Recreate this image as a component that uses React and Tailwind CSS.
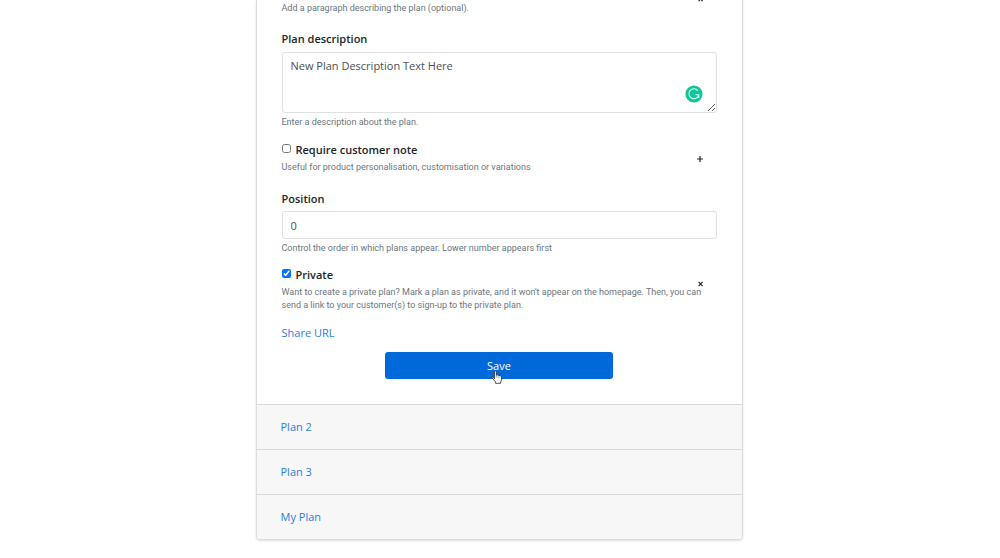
import { useState } from 'react';

const plans = ['Plan 2', 'Plan 3', 'My Plan'];

function HelpText({ children }) {
  return <p className="font-['Roboto',sans-serif] text-[9px] leading-[13px] text-[#6c757d]">{children}</p>;
}

function ToggleButton({ open, label, onClick }) {
  return (
    <button
      type="button"
      aria-label={label}
      onClick={onClick}
      className="absolute right-[11px] top-3 flex h-3 w-3 items-center justify-center text-[#212529]"
    >
      <svg viewBox="0 0 8 8" className="h-2 w-2" fill="none" stroke="currentColor" strokeWidth="1.2">
        {open ? <path d="M2.6 1.9l4 4.2M6.6 1.9l-4 4.2" /> : <path d="M4 1v6M1 4h6" />}
      </svg>
    </button>
  );
}

function CheckField({ id, label, help, checked, onChange }) {
  return (
    <div className="relative">
      <div className="flex items-start gap-[5px]">
        <input
          id={id}
          type="checkbox"
          checked={checked}
          onChange={(e) => onChange(e.target.checked)}
          className="mt-[3px] h-[9px] w-[9px] accent-[#0075ff]"
        />
        <label htmlFor={id} className="text-[11px] font-semibold leading-[18px]">{label}</label>
      </div>
      <div className="pt-[2px]">
        <HelpText>{help}</HelpText>
      </div>
      <ToggleButton open={checked} label={`Toggle ${label}`} onClick={() => onChange(!checked)} />
    </div>
  );
}

function GrammarBadge() {
  return (
    <svg viewBox="0 0 18 18" className="absolute bottom-[10px] right-[14px] h-[18px] w-[18px]" aria-hidden="true">
      <circle cx="9" cy="9" r="8.6" fill="#15c39a" />
      <path
        d="M12.8 5.6A5 5 0 1 0 13.8 9.8M10.4 9.8h3.4v3.2"
        fill="none"
        stroke="#d4fbef"
        strokeWidth="1.1"
      />
    </svg>
  );
}

function HandCursor() {
  return (
    <svg viewBox="0 0 12 14" className="pointer-events-none absolute left-1/2 top-[18px] -ml-2 h-[14px] w-3" aria-hidden="true">
      <path
        d="M3.4 8.7V1.8c0-1.3 1.9-1.3 1.9 0v3.5c.3-.7 1.7-.6 1.8.3.4-.6 1.6-.5 1.7.4.5-.5 1.7-.2 1.7.8v2.9c0 1-.6 1.6-.8 2.3v1.3H4.6V12C3.6 10.9 2.3 9.3 1.2 7.9.5 6.8 1.6 6.2 2.4 7z"
        fill="#fff"
        stroke="#222"
        strokeWidth="0.8"
        strokeLinejoin="round"
      />
      <path d="M5.3 5.5v2.3M7.1 6v1.8M8.8 6.5v1.3" stroke="#555" strokeWidth="0.5" />
    </svg>
  );
}

export default function App() {
  const [description, setDescription] = useState('New Plan Description Text Here');
  const [position, setPosition] = useState('0');
  const [note, setNote] = useState(false);
  const [isPrivate, setIsPrivate] = useState(true);

  return (
    <main className="overflow-hidden bg-white pb-[19px] pr-[2px] font-['Open_Sans','Noto_Sans',sans-serif] text-[#212529]">
      <div className="mx-auto w-full max-w-[487px] overflow-hidden rounded-b border border-t-0 border-[#dcdcdc] shadow-sm">
        <form className="px-[25px] pb-[25px] pt-[2px]" onSubmit={(e) => e.preventDefault()}>
          <div className="relative">
            <HelpText>Add a paragraph describing the plan (optional).</HelpText>
            <button type="button" aria-label="Toggle description" className="absolute -top-[9px] right-[11px] flex h-3 w-3 items-center justify-center">
              <svg viewBox="0 0 8 8" className="h-2 w-2" fill="none" stroke="currentColor" strokeWidth="1.2">
                <path d="M2.6 1.9l4 4.2M6.6 1.9l-4 4.2" />
              </svg>
            </button>
          </div>

          <div className="mt-[15px]">
            <label htmlFor="description" className="block text-[11px] font-semibold leading-[18px]">Plan description</label>
            <div className="relative mt-1">
              <textarea
                id="description"
                value={description}
                onChange={(e) => setDescription(e.target.value)}
                spellCheck={false}
                className="block h-[61px] w-full resize-y rounded-[3px] border border-[#dfe1e5] px-2 py-1 text-[11px] leading-[18px] text-[#495057]"
              />
              <GrammarBadge />
            </div>
            <div className="pt-[3px]">
              <HelpText>Enter a description about the plan.</HelpText>
            </div>
          </div>

          <div className="mt-3">
            <CheckField
              id="note"
              label="Require customer note"
              help="Useful for product personalisation, customisation or variations"
              checked={note}
              onChange={setNote}
            />
          </div>

          <div className="mt-4">
            <label htmlFor="position" className="block text-[11px] font-semibold leading-[18px]">Position</label>
            <input
              id="position"
              type="number"
              value={position}
              onChange={(e) => setPosition(e.target.value)}
              className="mt-[3px] block h-7 w-full rounded-[3px] border border-[#dfe1e5] px-2 text-[11px] text-[#495057]"
            />
            <div className="pt-[3px]">
              <HelpText>Control the order in which plans appear. Lower number appears first</HelpText>
            </div>
          </div>

          <div className="mt-[11px]">
            <CheckField
              id="private"
              label="Private"
              help="Want to create a private plan? Mark a plan as private, and it won't appear on the homepage. Then, you can send a link to your customer(s) to sign-up to the private plan."
              checked={isPrivate}
              onChange={setIsPrivate}
            />
          </div>

          <div className="mt-3 text-[11px] leading-[18px]">
            <a href="#share" className="text-[#2a7de1]">Share URL</a>
          </div>

          <div className="relative mx-auto mt-[10px] w-[228px]">
            <button type="submit" className="block h-[27px] w-full rounded-[3px] bg-[#0069d9] text-[11px] leading-[18px] text-white">Save</button>
            <HandCursor />
          </div>
        </form>

        {plans.map((plan) => (
          <div key={plan} className="flex h-[45px] items-center border-t border-[#d9d9d9] bg-[#f7f7f7] px-6">
            <a href="#plan" className="text-[11px] leading-[18px] text-[#2a7de1]">{plan}</a>
          </div>
        ))}
      </div>
    </main>
  );
}
